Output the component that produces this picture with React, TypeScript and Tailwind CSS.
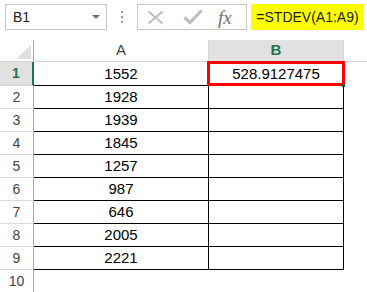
import React from 'react';

const values = ['1552', '1928', '1939', '1845', '1257', '987', '646', '2005', '2221'];

const cellFont = { fontFamily: '"Liberation Sans", Arial, sans-serif' };

export default function App() {
  return (
    <div className="w-[367px] h-[292px] overflow-hidden bg-white text-black" style={cellFont}>
      {/* formula bar */}
      <div className="flex h-[40px] pt-[4px]">
        <div className="ml-[5px] w-[102px] h-[26px] border border-[#c6c6c6] flex items-center justify-between pl-[7px] pr-[6px]">
          <span className="text-[14px] text-[#222]">B1</span>
          <svg width="8" height="5" viewBox="0 0 8 5">
            <path d="M0 0 L8 0 L4 4 Z" fill="#6f6f6f" />
          </svg>
        </div>
        <div className="w-[30px] h-[26px] flex flex-col items-center justify-center gap-[3px]">
          <span className="w-[2px] h-[2px] bg-[#9b9b9b]" />
          <span className="w-[2px] h-[2px] bg-[#9b9b9b]" />
          <span className="w-[2px] h-[2px] bg-[#9b9b9b]" />
        </div>
        <div className="w-[110px] h-[26px] border border-[#c6c6c6] flex items-center pl-[9px]">
          <svg width="17" height="15" viewBox="0 0 17 15">
            <path d="M1.5 1.5 L15.5 13.5 M15.5 1.5 L1.5 13.5" stroke="#bdbdbd" strokeWidth="2" fill="none" />
          </svg>
          <svg width="20" height="16" viewBox="0 0 20 16" className="ml-[19px]">
            <path d="M1.5 8.5 L7 13.5 L18.5 1.5" stroke="#bdbdbd" strokeWidth="3.2" fill="none" />
          </svg>
          <span
            className="ml-[15px] text-[19px] italic text-[#6f6f6f] leading-none"
            style={{ fontFamily: '"Liberation Serif", "Times New Roman", serif' }}
          >
            fx
          </span>
        </div>
        <div className="ml-[4px] w-[113px] h-[26px] bg-[#ffff00] flex items-center justify-center">
          <span className="text-[14px] text-[#222]">=STDEV(A1:A9)</span>
        </div>
      </div>

      {/* header row */}
      <div className="flex h-[22px]">
        <div className="w-[34px] border-r border-[#ababab] border-b border-b-[#d4d4d4] flex items-end justify-end pr-[2px] pb-[2px]">
          <svg width="15" height="14" viewBox="0 0 15 14">
            <path d="M0 14 L15 14 L15 0 Z" fill="#dfdfdf" />
          </svg>
        </div>
        <div className="w-[175px] border-r border-b border-[#d4d4d4] flex items-center justify-center text-[15px] text-[#444]">
          A
        </div>
        <div className="w-[135px] bg-[#e1e1e1] border-r border-b border-[#d4d4d4] flex items-center justify-center text-[15px] font-bold text-[#217346]">
          B
        </div>
        <div className="flex-1 border-b border-[#d4d4d4]" />
      </div>

      {/* data rows */}
      {values.map((v, i) => (
        <div key={v} className={`flex ${i === 0 ? 'h-[24px]' : 'h-[23px]'}`}>
          {i === 0 ? (
            <div className="w-[34px] bg-[#e1e1e1] border-r-2 border-[#217346] border-b border-b-[#d4d4d4] flex items-center justify-center text-[14px] font-bold text-[#217346]">
              1
            </div>
          ) : (
            <div className="w-[34px] border-r border-[#ababab] border-b border-b-[#dadada] flex items-center justify-center text-[14px] text-[#444]">
              {i + 1}
            </div>
          )}
          <div className="w-[175px] border-r border-b border-black flex items-end justify-center text-[15px]">
            {v}
          </div>
          <div className="relative w-[135px] border-r border-b border-black flex items-end justify-center text-[15px]">
            {i === 0 && (
              <>
                528.9127475
                <div className="absolute -left-[2px] -top-[1px] -right-[2px] -bottom-[1px] border-[3px] border-[#ff0000]" />
                <div className="absolute -right-[2px] -bottom-[2px] w-[3px] h-[3px] bg-[#1e5e3b]" />
              </>
            )}
          </div>
        </div>
      ))}

      {/* row 10 */}
      <div className="flex h-[23px]">
        <div className="w-[34px] border-r border-[#ababab] flex items-center justify-center text-[14px] text-[#444]">
          10
        </div>
      </div>
    </div>
  );
}
